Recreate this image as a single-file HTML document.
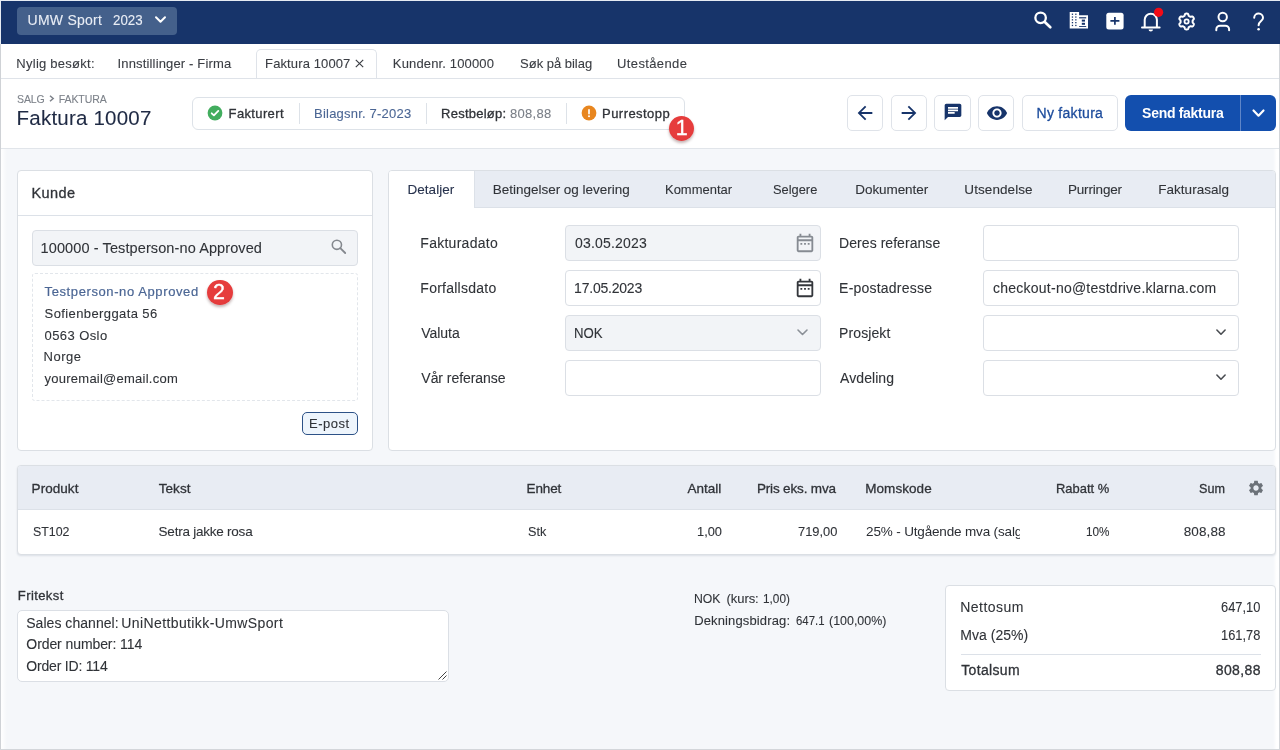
<!DOCTYPE html>
<html lang="no"><head><meta charset="utf-8"><title>Faktura 10007</title>
<style>
html,body{margin:0;padding:0;}
body{width:1280px;height:750px;overflow:hidden;background:#f5f7fa;font-family:"Liberation Sans",sans-serif;}
#app{position:relative;width:1280px;height:750px;overflow:hidden;background:#f5f7fa;}
.a{position:absolute;box-sizing:border-box;}
.t{will-change:opacity;position:absolute;white-space:nowrap;line-height:1;font-family:"Liberation Sans",sans-serif;}
.card{background:#fff;border:1px solid #dbdfe4;border-radius:4px;}
.inp{background:#fff;border:1px solid #dbdfe5;border-radius:4px;}
.inp.dis{background:#f2f4f7;}
.btn{background:#fff;border:1px solid #dfe3e9;border-radius:5px;}
svg{position:absolute;overflow:visible;}

</style></head>
<body>
<div id="app">
<!-- frame -->
<div class="a" style="left:0;top:0;width:1280px;height:1px;background:#e6ebf3"></div>
<div class="a" style="left:0;top:0;width:1px;height:44px;background:#e6ebf3"></div>
<div class="a" style="left:0;top:44px;width:1px;height:706px;background:#cfd2d6"></div>
<div class="a" style="left:1279px;top:44px;width:1px;height:706px;background:#d3d6da"></div>
<div class="a" style="left:0;top:749px;width:1280px;height:1px;background:#d3d6da"></div>

<!-- edge light strips -->
<div class="a" style="left:1px;top:149px;width:6px;height:600px;background:linear-gradient(to right,#ffffff,rgba(255,255,255,0))"></div>
<div class="a" style="left:1273px;top:149px;width:6px;height:600px;background:linear-gradient(to right,rgba(255,255,255,0),#ffffff 60%)"></div>
<!-- top bar -->
<div class="a" style="left:1px;top:1px;width:1279px;height:43px;background:#17346a"></div>
<div class="a" style="left:17px;top:7px;width:160px;height:28px;background:#44608b;border-radius:4px"></div>
<svg style="left:155px;top:16px" width="11" height="8" viewBox="0 0 11 8"><path d="M1 1.2 L5.5 5.8 L10 1.2" fill="none" stroke="#fff" stroke-width="2" stroke-linecap="round" stroke-linejoin="round"/></svg>

<!-- top icons -->
<svg style="left:0;top:0" width="1280" height="44" viewBox="0 0 1280 44">
 <!-- search -->
 <circle cx="1040.600" cy="17.800" r="5.250" fill="none" stroke="#fff" stroke-width="2.300"/>
 <path d="M1044.800 22 L1050.300 27.300" stroke="#fff" stroke-width="2.700" stroke-linecap="round" fill="none"/>
 <!-- building -->
 <path fill="#fff" d="M1069.700 12H1079.100V15.300H1088V28.400H1069.700Z"/>
 <g fill="#17346a">
  <rect x="1071.800" y="13.600" width="1.300" height="1.300"/><rect x="1075.200" y="13.600" width="1.300" height="1.300"/>
  <rect x="1071.800" y="16.400" width="1.300" height="1.300"/><rect x="1075.200" y="16.400" width="1.300" height="1.300"/>
  <rect x="1071.800" y="19.200" width="1.300" height="1.300"/><rect x="1075.200" y="19.200" width="1.300" height="1.300"/>
  <rect x="1071.800" y="22" width="1.300" height="1.300"/><rect x="1075.200" y="22" width="1.300" height="1.300"/>
  <rect x="1071.800" y="24.800" width="1.300" height="1.300"/><rect x="1075.200" y="24.800" width="1.300" height="1.300"/>
  <rect x="1079.100" y="17.200" width="7.100" height="1.200"/>
  <rect x="1081.800" y="19.600" width="3.200" height="2"/><rect x="1081.800" y="22.800" width="3.200" height="2"/>
  <rect x="1079.100" y="26" width="7.100" height="0.900"/>
 </g>
 <!-- plus box -->
 <rect x="1106.300" y="12.800" width="17.300" height="16.600" rx="2.500" fill="#fff"/>
 <path d="M1114.900 17V24.800M1110.400 20.900H1119.400" stroke="#17346a" stroke-width="1.700" fill="none"/>
 <!-- bell -->
 <path d="M1144.700 27.500V19.800a6.100 6.100 0 0 1 12.200 0V27.500" fill="none" stroke="#fff" stroke-width="2"/>
 <path d="M1142 27.600H1159.600" stroke="#fff" stroke-width="2" stroke-linecap="round" fill="none"/>
 <path d="M1148.600 29.600h4.400a2.200 2 0 0 1-4.400 0z" fill="#fff"/>
 <circle cx="1158.600" cy="12.300" r="4.600" fill="#f30b17"/>
 <!-- gear -->
 <path d="M1186.60 13.60 L1186.94 13.61 L1187.29 13.65 L1187.62 13.73 L1187.94 13.89 L1188.21 14.23 L1188.40 14.79 L1188.54 15.35 L1188.71 15.70 L1188.92 15.90 L1189.14 16.05 L1189.37 16.17 L1189.60 16.30 L1189.83 16.44 L1190.05 16.57 L1190.29 16.69 L1190.57 16.77 L1190.96 16.75 L1191.51 16.59 L1192.09 16.47 L1192.52 16.53 L1192.82 16.73 L1193.06 16.98 L1193.26 17.26 L1193.44 17.55 L1193.60 17.85 L1193.74 18.17 L1193.84 18.50 L1193.86 18.86 L1193.71 19.26 L1193.31 19.70 L1192.90 20.10 L1192.68 20.43 L1192.61 20.71 L1192.60 20.98 L1192.60 21.24 L1192.60 21.50 L1192.60 21.76 L1192.60 22.02 L1192.61 22.29 L1192.68 22.57 L1192.90 22.90 L1193.31 23.30 L1193.71 23.74 L1193.86 24.14 L1193.84 24.50 L1193.74 24.83 L1193.60 25.15 L1193.44 25.45 L1193.26 25.74 L1193.06 26.02 L1192.82 26.27 L1192.52 26.47 L1192.09 26.53 L1191.51 26.41 L1190.96 26.25 L1190.57 26.23 L1190.29 26.31 L1190.05 26.43 L1189.83 26.56 L1189.60 26.70 L1189.37 26.83 L1189.14 26.95 L1188.92 27.10 L1188.71 27.30 L1188.54 27.65 L1188.40 28.21 L1188.21 28.77 L1187.94 29.11 L1187.62 29.27 L1187.29 29.35 L1186.94 29.39 L1186.60 29.40 L1186.26 29.39 L1185.91 29.35 L1185.58 29.27 L1185.26 29.11 L1184.99 28.77 L1184.80 28.21 L1184.66 27.65 L1184.49 27.30 L1184.28 27.10 L1184.06 26.95 L1183.83 26.83 L1183.60 26.70 L1183.37 26.56 L1183.15 26.43 L1182.91 26.31 L1182.63 26.23 L1182.24 26.25 L1181.69 26.41 L1181.11 26.53 L1180.68 26.47 L1180.38 26.27 L1180.14 26.02 L1179.94 25.74 L1179.76 25.45 L1179.60 25.15 L1179.46 24.83 L1179.36 24.50 L1179.34 24.14 L1179.49 23.74 L1179.89 23.30 L1180.30 22.90 L1180.52 22.57 L1180.59 22.29 L1180.60 22.02 L1180.60 21.76 L1180.60 21.50 L1180.60 21.24 L1180.60 20.98 L1180.59 20.71 L1180.52 20.43 L1180.30 20.10 L1179.89 19.70 L1179.49 19.26 L1179.34 18.86 L1179.36 18.50 L1179.46 18.17 L1179.60 17.85 L1179.76 17.55 L1179.94 17.26 L1180.14 16.98 L1180.38 16.73 L1180.68 16.53 L1181.11 16.47 L1181.69 16.59 L1182.24 16.75 L1182.63 16.77 L1182.91 16.69 L1183.15 16.57 L1183.37 16.44 L1183.60 16.30 L1183.83 16.17 L1184.06 16.05 L1184.28 15.90 L1184.49 15.70 L1184.66 15.35 L1184.80 14.79 L1184.99 14.23 L1185.26 13.89 L1185.58 13.73 L1185.91 13.65 L1186.26 13.61 L1186.60 13.60Z" fill="none" stroke="#fff" stroke-width="2" stroke-linejoin="round"/>
 <circle cx="1186.600" cy="21.500" r="2.100" fill="none" stroke="#fff" stroke-width="1.800"/>
 <!-- user -->
 <circle cx="1222.700" cy="17" r="4.200" fill="none" stroke="#fff" stroke-width="2"/>
 <path d="M1216.300 30.300V29.500a3.800 3.800 0 0 1 3.800-3.800h5.200a3.800 3.800 0 0 1 3.800 3.800V30.300" fill="none" stroke="#fff" stroke-width="2" stroke-linecap="round"/>
 <!-- help -->
 <path d="M1254.200 17.700a4.400 4.300 0 0 1 8.800 0.300c0 2.800-4.400 3.300-4.400 7.200" fill="none" stroke="#fff" stroke-width="2" stroke-linecap="round"/>
 <circle cx="1258.600" cy="29.300" r="1.300" fill="#fff"/>
</svg>

<!-- recent tabs row -->
<div class="a" style="left:1px;top:44px;width:1278px;height:35px;background:#fff;border-bottom:1px solid #dfe3e9"></div>
<div class="a" style="left:256px;top:49px;width:121px;height:29px;background:#fff;border:1px solid #dfe3e9;border-bottom:none;border-radius:5px 5px 0 0"></div>
<svg style="left:355px;top:59.300px" width="9" height="9" viewBox="0 0 9 9"><path d="M0.800 0.800 L8.200 8.200 M8.200 0.800 L0.800 8.200" stroke="#3a3d43" stroke-width="1.150" fill="none"/></svg>

<!-- page header -->
<div class="a" style="left:1px;top:79px;width:1278px;height:70px;background:#fff;border-bottom:1px solid #e1e5ea"></div>
<svg style="left:49px;top:95px" width="6" height="7" viewBox="0 0 6 7"><path d="M1 0.700 L4.200 3.500 L1 6.300" fill="none" stroke="#7d828a" stroke-width="1.500"/></svg>
<!-- status box -->
<div class="a" style="left:192px;top:97px;width:493px;height:33px;background:#fff;border:1px solid #dde2e8;border-radius:6px"></div>
<div class="a" style="left:299px;top:103px;width:1px;height:21px;background:#dde2e8"></div>
<div class="a" style="left:426px;top:103px;width:1px;height:21px;background:#dde2e8"></div>
<div class="a" style="left:566px;top:103px;width:1px;height:21px;background:#dde2e8"></div>
<svg style="left:206.700px;top:105.400px" width="16" height="16" viewBox="0 0 16 16"><circle cx="8" cy="8" r="7.400" fill="#42ad5e"/><path d="M4.700 8.300 L6.900 10.400 L11.300 5.900" fill="none" stroke="#fff" stroke-width="1.800" stroke-linecap="round" stroke-linejoin="round"/></svg>
<svg style="left:580.600px;top:105px" width="16" height="16" viewBox="0 0 16 16"><circle cx="8" cy="8" r="7.400" fill="#e8861f"/><path d="M8 4.800V8.600" stroke="#fff" stroke-width="1.700" stroke-linecap="round"/><circle cx="8" cy="11.300" r="1" fill="#fff"/></svg>
<!-- badge 1 -->
<div class="a" style="left:668.900px;top:115.900px;width:25.600px;height:25.600px;border-radius:50%;background:radial-gradient(circle at 50% 45%,#e63c3c 60%,#d23338 100%);box-shadow:0 2px 3px rgba(60,0,0,.3)"></div>
<span class="t" style="left:675.700px;top:117.800px;font-size:21.500px;color:#fff;-webkit-text-stroke:0.35px #fff">1</span>

<!-- nav buttons -->
<div class="a btn" style="left:847px;top:95px;width:36.400px;height:36px"></div>
<div class="a btn" style="left:890.700px;top:95px;width:36.400px;height:36px"></div>
<div class="a btn" style="left:934.400px;top:95px;width:36.400px;height:36px"></div>
<div class="a btn" style="left:978.100px;top:95px;width:36.400px;height:36px"></div>
<svg style="left:854px;top:102px" width="22" height="22" viewBox="0 0 24 24"><path fill="#17346a" d="M20 11H7.830l5.590-5.590L12 4l-8 8 8 8 1.410-1.410L7.830 13H20v-2z"/></svg>
<svg style="left:898px;top:102px" width="22" height="22" viewBox="0 0 24 24"><path fill="#17346a" d="M12 4l-1.410 1.410L16.170 11H4v2h12.170l-5.580 5.590L12 20l8-8z"/></svg>
<svg style="left:943px;top:102px" width="20" height="20" viewBox="0 0 24 24"><path fill="#17346a" d="M20 2H4c-1.100 0-1.990.9-1.990 2L2 22l4-4h14c1.100 0 2-.9 2-2V4c0-1.100-.9-2-2-2zM6 9h12v2H6V9zm8 5H6v-2h8v2zm4-6H6V6h12v2z"/></svg>
<svg style="left:986px;top:102px" width="22" height="22" viewBox="0 0 24 24"><path fill="#17346a" d="M12 4.500C7 4.500 2.730 7.610 1 12c1.730 4.390 6 7.500 11 7.500s9.270-3.110 11-7.500c-1.730-4.390-6-7.500-11-7.500zM12 17c-2.760 0-5-2.240-5-5s2.240-5 5-5 5 2.240 5 5-2.240 5-5 5zm0-8c-1.660 0-3 1.340-3 3s1.340 3 3 3 3-1.340 3-3-1.340-3-3-3z"/></svg>
<div class="a btn" style="left:1022px;top:95px;width:96px;height:36px"></div>
<div class="a" style="left:1125px;top:95px;width:151px;height:36px;background:#134fae;border-radius:6px"></div>
<div class="a" style="left:1240px;top:95px;width:1px;height:36px;background:#5f86c8"></div>
<svg style="left:1252px;top:109px" width="13" height="9" viewBox="0 0 13 9"><path d="M1.500 1.500 L6.500 6.700 L11.500 1.500" fill="none" stroke="#fff" stroke-width="2.200" stroke-linecap="round" stroke-linejoin="round"/></svg>

<!-- kunde card -->
<div class="a card" style="left:17px;top:170px;width:356px;height:281px"></div>
<div class="a" style="left:18px;top:215px;width:354px;height:1px;background:#dce1e8"></div>
<div class="a inp dis" style="left:32px;top:230px;width:326px;height:36px"></div>
<svg style="left:328px;top:236px" width="20" height="20" viewBox="328 236 20 20"><circle cx="336.900" cy="244.800" r="4.600" fill="none" stroke="#84888e" stroke-width="1.600"/><path d="M340.300 248.200 L345.200 253" stroke="#84888e" stroke-width="1.800" stroke-linecap="round"/></svg>
<div class="a" style="left:32px;top:273px;width:326px;height:128px;border:1px dashed #e2e6eb;border-radius:3px"></div>
<div class="a" style="left:207px;top:279.800px;width:25.600px;height:25.600px;border-radius:50%;background:radial-gradient(circle at 50% 45%,#e63c3c 60%,#d23338 100%);box-shadow:0 2px 3px rgba(60,0,0,.3)"></div>
<span class="t" style="left:213px;top:281.600px;font-size:21.500px;color:#fff;-webkit-text-stroke:0.35px #fff">2</span>
<div class="a" style="left:302px;top:412px;width:56px;height:23px;background:#eef5fc;border:1.300px solid #2d5287;border-radius:5px"></div>

<!-- detail panel -->
<div class="a card" style="left:388px;top:170px;width:888px;height:281px;overflow:hidden">
  <div class="a" style="left:0;top:0;width:888px;height:37px;background:#e8ecf3;border-bottom:1px solid #dce1e8"></div>
  <div class="a" style="left:0;top:0;width:86px;height:37px;background:#fff;border-right:1px solid #dce1e8"></div>
</div>
<!-- inputs left col -->
<div class="a inp dis" style="left:565px;top:225px;width:256px;height:36px"></div>
<div class="a inp" style="left:565px;top:270px;width:256px;height:36px"></div>
<div class="a inp dis" style="left:565px;top:315px;width:256px;height:36px"></div>
<div class="a inp" style="left:565px;top:360px;width:256px;height:36px"></div>
<!-- inputs right col -->
<div class="a inp" style="left:983px;top:225px;width:256px;height:36px"></div>
<div class="a inp" style="left:983px;top:270px;width:256px;height:36px"></div>
<div class="a inp" style="left:983px;top:315px;width:256px;height:36px"></div>
<div class="a inp" style="left:983px;top:360px;width:256px;height:36px"></div>
<!-- calendar icons -->
<svg style="left:793.500px;top:231.800px" width="22" height="22" viewBox="0 0 24 24"><path fill="#868b92" d="M19 4h-1V2h-2v2H8V2H6v2H5c-1.110 0-1.990.9-1.990 2L3 20c0 1.100.89 2 2 2h14c1.100 0 2-.9 2-2V6c0-1.100-.9-2-2-2zm0 16H5V10h14v10zm0-12H5V6h14v2zM9 14H7v-2h2v2zm4 0h-2v-2h2v2zm4 0h-2v-2h2v2z"/></svg>
<svg style="left:793.500px;top:276.800px" width="22" height="22" viewBox="0 0 24 24"><path fill="#33363b" d="M19 4h-1V2h-2v2H8V2H6v2H5c-1.110 0-1.990.9-1.990 2L3 20c0 1.100.89 2 2 2h14c1.100 0 2-.9 2-2V6c0-1.100-.9-2-2-2zm0 16H5V10h14v10zm0-12H5V6h14v2zM9 14H7v-2h2v2zm4 0h-2v-2h2v2zm4 0h-2v-2h2v2z"/></svg>
<!-- chevrons -->
<svg style="left:797px;top:329px" width="11" height="7" viewBox="0 0 11 7"><path d="M1 1 L5.500 5.500 L10 1" fill="none" stroke="#8b9097" stroke-width="1.600" stroke-linecap="round" stroke-linejoin="round"/></svg>
<svg style="left:1216px;top:329.200px" width="10" height="7" viewBox="0 0 10 7"><path d="M0.900 1 L5 5.200 L9.100 1" fill="none" stroke="#4a4d52" stroke-width="1.600" stroke-linecap="round" stroke-linejoin="round"/></svg>
<svg style="left:1216px;top:374.200px" width="10" height="7" viewBox="0 0 10 7"><path d="M0.900 1 L5 5.200 L9.100 1" fill="none" stroke="#4a4d52" stroke-width="1.600" stroke-linecap="round" stroke-linejoin="round"/></svg>

<!-- table -->
<div class="a card" style="left:17px;top:465px;width:1259px;height:90px;overflow:hidden;box-shadow:0 1px 2px rgba(40,60,90,.12)">
  <div class="a" style="left:0;top:0;width:1259px;height:44px;background:#e8ecf3;border-bottom:1px solid #dce1e8"></div>
</div>
<svg style="left:1247px;top:479px" width="18" height="18" viewBox="0 0 24 24"><path fill="#6c7279" d="M19.140 12.940c.04-.3.060-.61.060-.94 0-.32-.02-.64-.07-.94l2.030-1.580c.18-.14.230-.41.120-.61l-1.920-3.320c-.12-.22-.37-.29-.59-.22l-2.390.96c-.5-.38-1.030-.7-1.620-.94l-.36-2.540c-.04-.24-.24-.41-.48-.41h-3.840c-.24 0-.43.170-.47.410l-.36 2.540c-.59.240-1.130.57-1.620.94l-2.390-.96c-.22-.08-.47 0-.59.220L2.740 8.870c-.12.210-.08.470.12.610l2.030 1.580c-.05.300-.09.630-.09.940s.02.640.07.940l-2.030 1.580c-.18.140-.23.410-.12.610l1.920 3.320c.12.220.37.290.59.220l2.390-.96c.5.380 1.030.7 1.620.94l.36 2.540c.05.240.24.410.48.410h3.840c.24 0 .44-.17.470-.41l.36-2.540c.59-.24 1.130-.56 1.620-.94l2.390.96c.22.080.47 0 .59-.22l1.920-3.320c.12-.22.070-.47-.12-.61l-2.010-1.580zM12 15.600c-1.980 0-3.600-1.620-3.600-3.600s1.620-3.600 3.600-3.600 3.600 1.620 3.600 3.600-1.620 3.600-3.600 3.600z"/></svg>
<!-- momskode clipped text -->
<div class="a" style="left:860px;top:520px;width:160.3px;height:28px;overflow:hidden"><span class="t" style="left:6.10px;top:4.82px;font-size:13.5px;color:#2a2d33;letter-spacing:-0.160px">25% - Utgående mva (salg)</span></div>

<!-- fritekst -->
<div class="a inp" style="left:17px;top:610px;width:432px;height:72px;border-radius:5px"></div>
<svg style="left:438px;top:671px" width="9" height="9" viewBox="0 0 9 9"><path d="M8.500 0.500 L0.500 8.500 M8.500 4.500 L4.500 8.500" stroke="#444" stroke-width="1" fill="none"/></svg>

<!-- totals -->
<div class="a card" style="left:945px;top:585px;width:331px;height:106px"></div>
<div class="a" style="left:961px;top:654px;width:300px;height:1px;background:#dce1e8"></div>

<span class="t" style="left:27.60px;top:13.15px;font-size:14px;letter-spacing:0.231px;color:#e9edf5;-webkit-text-stroke:0.1px currentColor;">UMW Sport</span>
<span class="t" style="left:113.10px;top:13.15px;font-size:14px;letter-spacing:0.000px;color:#e9edf5;-webkit-text-stroke:0.1px currentColor;transform:scaleX(0.9499);transform-origin:0 0;">2023</span>
<span class="t" style="left:16.35px;top:56.50px;font-size:13px;letter-spacing:0.252px;color:#3a3d43;-webkit-text-stroke:0.1px currentColor;">Nylig besøkt:</span>
<span class="t" style="left:117.60px;top:56.50px;font-size:13px;letter-spacing:0.150px;color:#3a3d43;-webkit-text-stroke:0.1px currentColor;">Innstillinger - Firma</span>
<span class="t" style="left:265.10px;top:56.50px;font-size:13px;letter-spacing:0.116px;color:#3a3d43;-webkit-text-stroke:0.1px currentColor;">Faktura 10007</span>
<span class="t" style="left:392.85px;top:56.50px;font-size:13px;letter-spacing:0.142px;color:#3a3d43;-webkit-text-stroke:0.1px currentColor;">Kundenr. 100000</span>
<span class="t" style="left:520.10px;top:56.50px;font-size:13px;letter-spacing:-0.021px;color:#3a3d43;-webkit-text-stroke:0.1px currentColor;">Søk på bilag</span>
<span class="t" style="left:617.10px;top:56.50px;font-size:13px;letter-spacing:0.364px;color:#3a3d43;-webkit-text-stroke:0.1px currentColor;">Utestående</span>
<span class="t" style="left:17.10px;top:93.61px;font-size:10.5px;letter-spacing:-0.183px;color:#7d828a;-webkit-text-stroke:0.1px currentColor;">SALG</span>
<span class="t" style="left:58.85px;top:93.61px;font-size:10.5px;letter-spacing:-0.106px;color:#7d828a;-webkit-text-stroke:0.1px currentColor;">FAKTURA</span>
<span class="t" style="left:16.60px;top:108.40px;font-size:20.5px;letter-spacing:0.208px;color:#1f2a44;-webkit-text-stroke:0.1px currentColor;">Faktura 10007</span>
<span class="t" style="left:228.60px;top:107.00px;font-size:13px;letter-spacing:0.362px;color:#303338;-webkit-text-stroke:0.3px currentColor;">Fakturert</span>
<span class="t" style="left:314.10px;top:107.00px;font-size:13px;letter-spacing:0.205px;color:#4b6694;-webkit-text-stroke:0.1px currentColor;">Bilagsnr. 7-2023</span>
<span class="t" style="left:441.10px;top:107.00px;font-size:13px;letter-spacing:0.226px;color:#303338;-webkit-text-stroke:0.3px currentColor;">Restbeløp:</span>
<span class="t" style="left:510.10px;top:107.00px;font-size:13px;letter-spacing:0.253px;color:#7a7f87;-webkit-text-stroke:0.1px currentColor;">808,88</span>
<span class="t" style="left:602.10px;top:107.00px;font-size:13px;letter-spacing:0.437px;color:#303338;-webkit-text-stroke:0.3px currentColor;">Purrestopp</span>
<span class="t" style="left:1036.50px;top:106.15px;font-size:14px;letter-spacing:0.286px;color:#1d4c9c;-webkit-text-stroke:0.3px currentColor;">Ny faktura</span>
<span class="t" style="left:1142.10px;top:106.15px;font-size:14px;letter-spacing:-0.293px;color:#ffffff;font-weight:bold;">Send faktura</span>
<span class="t" style="left:31.60px;top:185.73px;font-size:14.5px;letter-spacing:0.357px;color:#303338;-webkit-text-stroke:0.3px currentColor;">Kunde</span>
<span class="t" style="left:40.60px;top:240.73px;font-size:14.5px;letter-spacing:0.105px;color:#303338;-webkit-text-stroke:0.1px currentColor;">100000 - Testperson-no Approved</span>
<span class="t" style="left:44.60px;top:284.75px;font-size:13px;letter-spacing:0.600px;color:#4b6694;-webkit-text-stroke:0.2px currentColor;">Testperson-no Approved</span>
<span class="t" style="left:44.60px;top:307.00px;font-size:13px;letter-spacing:0.392px;color:#303338;-webkit-text-stroke:0.1px currentColor;">Sofienberggata 56</span>
<span class="t" style="left:44.60px;top:328.50px;font-size:13px;letter-spacing:0.408px;color:#303338;-webkit-text-stroke:0.1px currentColor;">0563 Oslo</span>
<span class="t" style="left:43.60px;top:349.75px;font-size:13px;letter-spacing:0.465px;color:#303338;-webkit-text-stroke:0.1px currentColor;">Norge</span>
<span class="t" style="left:44.60px;top:371.50px;font-size:13px;letter-spacing:0.241px;color:#303338;-webkit-text-stroke:0.1px currentColor;">youremail@email.com</span>
<span class="t" style="left:309.10px;top:417.00px;font-size:13px;letter-spacing:0.507px;color:#303338;-webkit-text-stroke:0.1px currentColor;">E-post</span>
<span class="t" style="left:407.50px;top:182.87px;font-size:13.5px;letter-spacing:0.038px;color:#27324d;-webkit-text-stroke:0.1px currentColor;">Detaljer</span>
<span class="t" style="left:492.85px;top:183.07px;font-size:13.5px;letter-spacing:-0.024px;color:#303338;-webkit-text-stroke:0.1px currentColor;">Betingelser og levering</span>
<span class="t" style="left:665.39px;top:183.07px;font-size:13.5px;letter-spacing:0.000px;color:#303338;-webkit-text-stroke:0.1px currentColor;transform:scaleX(0.9605);transform-origin:0 0;">Kommentar</span>
<span class="t" style="left:773.10px;top:183.07px;font-size:13.5px;letter-spacing:0.000px;color:#303338;-webkit-text-stroke:0.1px currentColor;transform:scaleX(0.9514);transform-origin:0 0;">Selgere</span>
<span class="t" style="left:855.35px;top:183.07px;font-size:13.5px;letter-spacing:-0.083px;color:#303338;-webkit-text-stroke:0.1px currentColor;">Dokumenter</span>
<span class="t" style="left:964.30px;top:183.07px;font-size:13.5px;letter-spacing:0.085px;color:#303338;-webkit-text-stroke:0.1px currentColor;">Utsendelse</span>
<span class="t" style="left:1067.90px;top:183.07px;font-size:13.5px;letter-spacing:-0.167px;color:#303338;-webkit-text-stroke:0.1px currentColor;">Purringer</span>
<span class="t" style="left:1158.20px;top:183.07px;font-size:13.5px;letter-spacing:0.036px;color:#303338;-webkit-text-stroke:0.1px currentColor;">Fakturasalg</span>
<span class="t" style="left:420.35px;top:236.15px;font-size:14px;letter-spacing:0.262px;color:#303338;-webkit-text-stroke:0.1px currentColor;">Fakturadato</span>
<span class="t" style="left:420.35px;top:281.15px;font-size:14px;letter-spacing:0.244px;color:#303338;-webkit-text-stroke:0.1px currentColor;">Forfallsdato</span>
<span class="t" style="left:421.35px;top:326.15px;font-size:14px;letter-spacing:-0.067px;color:#303338;-webkit-text-stroke:0.1px currentColor;">Valuta</span>
<span class="t" style="left:421.35px;top:371.15px;font-size:14px;letter-spacing:-0.049px;color:#303338;-webkit-text-stroke:0.1px currentColor;">Vår referanse</span>
<span class="t" style="left:575.10px;top:236.15px;font-size:14px;letter-spacing:0.168px;color:#303338;-webkit-text-stroke:0.1px currentColor;">03.05.2023</span>
<span class="t" style="left:574.10px;top:281.15px;font-size:14px;letter-spacing:-0.221px;color:#303338;-webkit-text-stroke:0.1px currentColor;">17.05.2023</span>
<span class="t" style="left:574.16px;top:326.15px;font-size:14px;letter-spacing:0.000px;color:#303338;-webkit-text-stroke:0.1px currentColor;transform:scaleX(0.9431);transform-origin:0 0;">NOK</span>
<span class="t" style="left:839.10px;top:236.15px;font-size:14px;letter-spacing:0.050px;color:#303338;-webkit-text-stroke:0.1px currentColor;">Deres referanse</span>
<span class="t" style="left:839.10px;top:281.15px;font-size:14px;letter-spacing:0.217px;color:#303338;-webkit-text-stroke:0.1px currentColor;">E-postadresse</span>
<span class="t" style="left:839.10px;top:326.15px;font-size:14px;letter-spacing:0.087px;color:#303338;-webkit-text-stroke:0.1px currentColor;">Prosjekt</span>
<span class="t" style="left:840.10px;top:371.15px;font-size:14px;letter-spacing:0.062px;color:#303338;-webkit-text-stroke:0.1px currentColor;">Avdeling</span>
<span class="t" style="left:993.10px;top:281.15px;font-size:14px;letter-spacing:0.233px;color:#303338;-webkit-text-stroke:0.1px currentColor;">checkout-no@testdrive.klarna.com</span>
<span class="t" style="left:31.60px;top:481.82px;font-size:13.5px;letter-spacing:0.045px;color:#303338;-webkit-text-stroke:0.3px currentColor;">Produkt</span>
<span class="t" style="left:158.85px;top:481.82px;font-size:13.5px;letter-spacing:0.009px;color:#303338;-webkit-text-stroke:0.3px currentColor;">Tekst</span>
<span class="t" style="left:526.60px;top:481.82px;font-size:13.5px;letter-spacing:-0.158px;color:#303338;-webkit-text-stroke:0.3px currentColor;">Enhet</span>
<span class="t" style="left:687.60px;top:481.82px;font-size:13.5px;letter-spacing:-0.046px;color:#303338;-webkit-text-stroke:0.3px currentColor;">Antall</span>
<span class="t" style="left:756.90px;top:481.82px;font-size:13.5px;letter-spacing:-0.159px;color:#303338;-webkit-text-stroke:0.3px currentColor;">Pris eks. mva</span>
<span class="t" style="left:865.20px;top:481.82px;font-size:13.5px;letter-spacing:0.068px;color:#303338;-webkit-text-stroke:0.3px currentColor;">Momskode</span>
<span class="t" style="left:1056.44px;top:481.82px;font-size:13.5px;letter-spacing:0.000px;color:#303338;-webkit-text-stroke:0.3px currentColor;transform:scaleX(0.9573);transform-origin:0 0;">Rabatt %</span>
<span class="t" style="left:1199.40px;top:481.82px;font-size:13.5px;letter-spacing:0.000px;color:#303338;-webkit-text-stroke:0.3px currentColor;transform:scaleX(0.9339);transform-origin:0 0;">Sum</span>
<span class="t" style="left:32.60px;top:524.82px;font-size:13.5px;letter-spacing:0.000px;color:#303338;-webkit-text-stroke:0.1px currentColor;transform:scaleX(0.9179);transform-origin:0 0;">ST102</span>
<span class="t" style="left:158.60px;top:524.82px;font-size:13.5px;letter-spacing:-0.233px;color:#303338;-webkit-text-stroke:0.1px currentColor;">Setra jakke rosa</span>
<span class="t" style="left:527.60px;top:524.82px;font-size:13.5px;letter-spacing:0.000px;color:#303338;-webkit-text-stroke:0.1px currentColor;transform:scaleX(0.9385);transform-origin:0 0;">Stk</span>
<span class="t" style="left:696.65px;top:524.82px;font-size:13.5px;letter-spacing:0.000px;color:#303338;-webkit-text-stroke:0.1px currentColor;transform:scaleX(0.9506);transform-origin:0 0;">1,00</span>
<span class="t" style="left:797.60px;top:524.82px;font-size:13.5px;letter-spacing:0.000px;color:#303338;-webkit-text-stroke:0.1px currentColor;transform:scaleX(0.9537);transform-origin:0 0;">719,00</span>
<span class="t" style="left:1086.03px;top:524.82px;font-size:13.5px;letter-spacing:0.000px;color:#303338;-webkit-text-stroke:0.1px currentColor;transform:scaleX(0.8722);transform-origin:0 0;">10%</span>
<span class="t" style="left:1183.70px;top:524.82px;font-size:13.5px;letter-spacing:0.122px;color:#303338;-webkit-text-stroke:0.1px currentColor;">808,88</span>
<span class="t" style="left:17.85px;top:589.00px;font-size:13px;letter-spacing:0.398px;color:#303338;-webkit-text-stroke:0.3px currentColor;">Fritekst</span>
<span class="t" style="left:26.20px;top:615.65px;font-size:14px;letter-spacing:0.042px;color:#303338;-webkit-text-stroke:0.1px currentColor;">Sales channel:</span>
<span class="t" style="left:121.30px;top:615.65px;font-size:14px;letter-spacing:0.392px;color:#303338;-webkit-text-stroke:0.1px currentColor;">UniNettbutikk-UmwSport</span>
<span class="t" style="left:26.35px;top:637.15px;font-size:14px;letter-spacing:-0.088px;color:#303338;-webkit-text-stroke:0.1px currentColor;">Order number: 114</span>
<span class="t" style="left:26.35px;top:658.75px;font-size:14px;letter-spacing:-0.204px;color:#303338;-webkit-text-stroke:0.1px currentColor;">Order ID: 114</span>
<span class="t" style="left:694.26px;top:591.60px;font-size:13px;letter-spacing:0.000px;color:#303338;-webkit-text-stroke:0.1px currentColor;transform:scaleX(0.9418);transform-origin:0 0;">NOK</span>
<span class="t" style="left:726.50px;top:591.60px;font-size:13px;letter-spacing:-0.058px;color:#303338;-webkit-text-stroke:0.1px currentColor;">(kurs:</span>
<span class="t" style="left:763.30px;top:591.60px;font-size:13px;letter-spacing:0.000px;color:#303338;-webkit-text-stroke:0.1px currentColor;transform:scaleX(0.9075);transform-origin:0 0;">1,00)</span>
<span class="t" style="left:694.20px;top:614.00px;font-size:13px;letter-spacing:0.133px;color:#303338;-webkit-text-stroke:0.1px currentColor;">Dekningsbidrag:</span>
<span class="t" style="left:795.60px;top:614.00px;font-size:13px;letter-spacing:0.000px;color:#303338;-webkit-text-stroke:0.1px currentColor;transform:scaleX(0.8757);transform-origin:0 0;">647.1</span>
<span class="t" style="left:829.20px;top:614.00px;font-size:13px;letter-spacing:0.000px;color:#303338;-webkit-text-stroke:0.1px currentColor;transform:scaleX(0.9572);transform-origin:0 0;">(100,00%)</span>
<span class="t" style="left:960.30px;top:599.85px;font-size:14px;letter-spacing:0.463px;color:#303338;-webkit-text-stroke:0.1px currentColor;">Nettosum</span>
<span class="t" style="left:960.30px;top:628.15px;font-size:14px;letter-spacing:0.022px;color:#303338;-webkit-text-stroke:0.1px currentColor;">Mva (25%)</span>
<span class="t" style="left:961.30px;top:662.75px;font-size:14px;letter-spacing:0.319px;color:#303338;-webkit-text-stroke:0.3px currentColor;">Totalsum</span>
<span class="t" style="left:1221.10px;top:599.85px;font-size:14px;letter-spacing:0.000px;color:#303338;-webkit-text-stroke:0.1px currentColor;transform:scaleX(0.9200);transform-origin:0 0;">647,10</span>
<span class="t" style="left:1221.18px;top:628.15px;font-size:14px;letter-spacing:0.000px;color:#303338;-webkit-text-stroke:0.1px currentColor;transform:scaleX(0.9181);transform-origin:0 0;">161,78</span>
<span class="t" style="left:1215.80px;top:662.75px;font-size:14px;letter-spacing:0.372px;color:#303338;-webkit-text-stroke:0.3px currentColor;">808,88</span>
</div>
</body></html>
